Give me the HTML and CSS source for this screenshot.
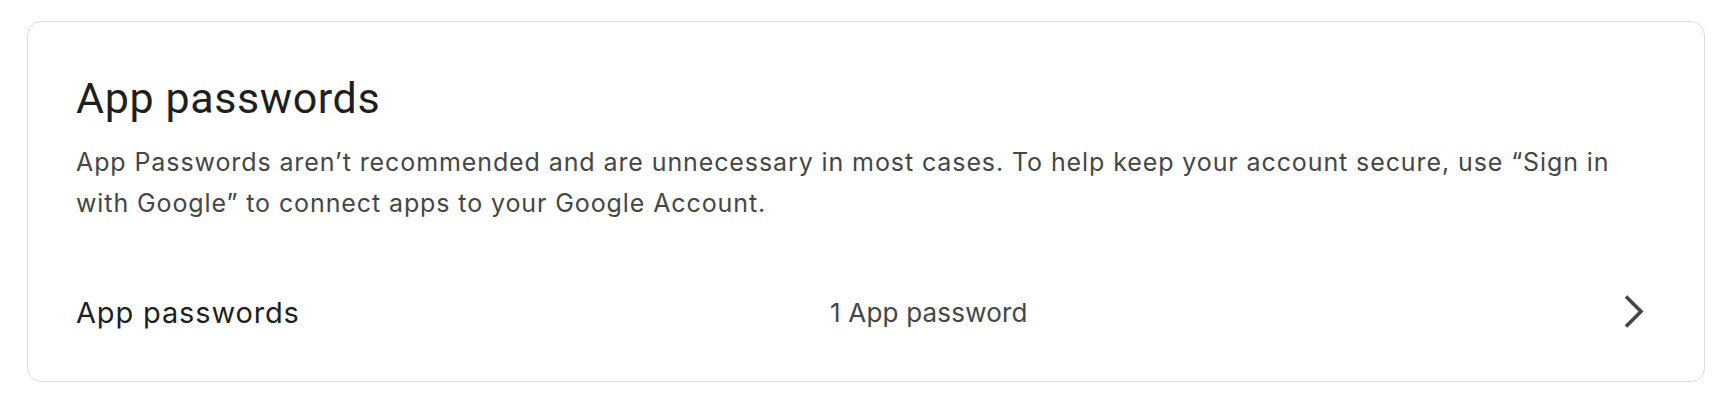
FILE: index.html
```html
<!DOCTYPE html>
<html lang="en">
<head>
<meta charset="utf-8">
<title>App passwords</title>
<link rel="stylesheet" href="styles.css">
</head>
<body>
<main class="page">
  <section class="card">
    <h1 class="card-title">App passwords</h1>
    <p class="card-desc">App Passwords aren’t recommended and are unnecessary in most cases. To help keep your account secure, use “Sign in with Google” to connect apps to your Google Account.</p>
    <a class="row" href="#">
      <span class="row-label">App passwords</span>
      <span class="row-value">1 App password</span>
      <svg class="chev" width="24" height="35" viewBox="0 0 24 35" aria-hidden="true">
        <polyline points="5,2.5 20,17.5 5,32.5" fill="none" stroke="#444746" stroke-width="3.6"/>
      </svg>
    </a>
  </section>
</main>
</body>
</html>
```
FILE: styles.css
```css
html, body {
  margin: 0;
  padding: 0;
  background: #ffffff;
}

body {
  font-family: Inter, Roboto, "Liberation Sans", Arial, sans-serif;
  color: #1f1f1f;
}

.page {
  padding: 21px 21px 0 27px;
}

.card {
  box-sizing: border-box;
  width: 1678px;
  border: 1px solid #dadce0;
  border-radius: 14px;
  padding: 50px 48px 48px 48px;
  background: #ffffff;
}

.card-title {
  margin: 0;
  font-family: Roboto, "Liberation Sans", Arial, sans-serif;
  font-size: 43px;
  line-height: 52px;
  font-weight: 400;
  letter-spacing: 0.6px;
  color: #1f1f1f;
}

.card-desc {
  margin: 18px 0 0 0;
  max-width: 1565px;
  font-size: 25px;
  line-height: 41px;
  color: #444746;
  letter-spacing: 0.9px;
}

.row {
  display: grid;
  grid-template-columns: 754px 1fr auto;
  align-items: center;
  margin-top: 69px;
  text-decoration: none;
  color: inherit;
}

.row-label {
  font-size: 29px;
  line-height: 40px;
  letter-spacing: 0.85px;
  color: #1f1f1f;
}

.row-value {
  font-size: 26px;
  line-height: 40px;
  letter-spacing: 0.2px;
  color: #444746;
}

.chev {
  display: block;
  margin: 0 11px 3px 0;
}
```
